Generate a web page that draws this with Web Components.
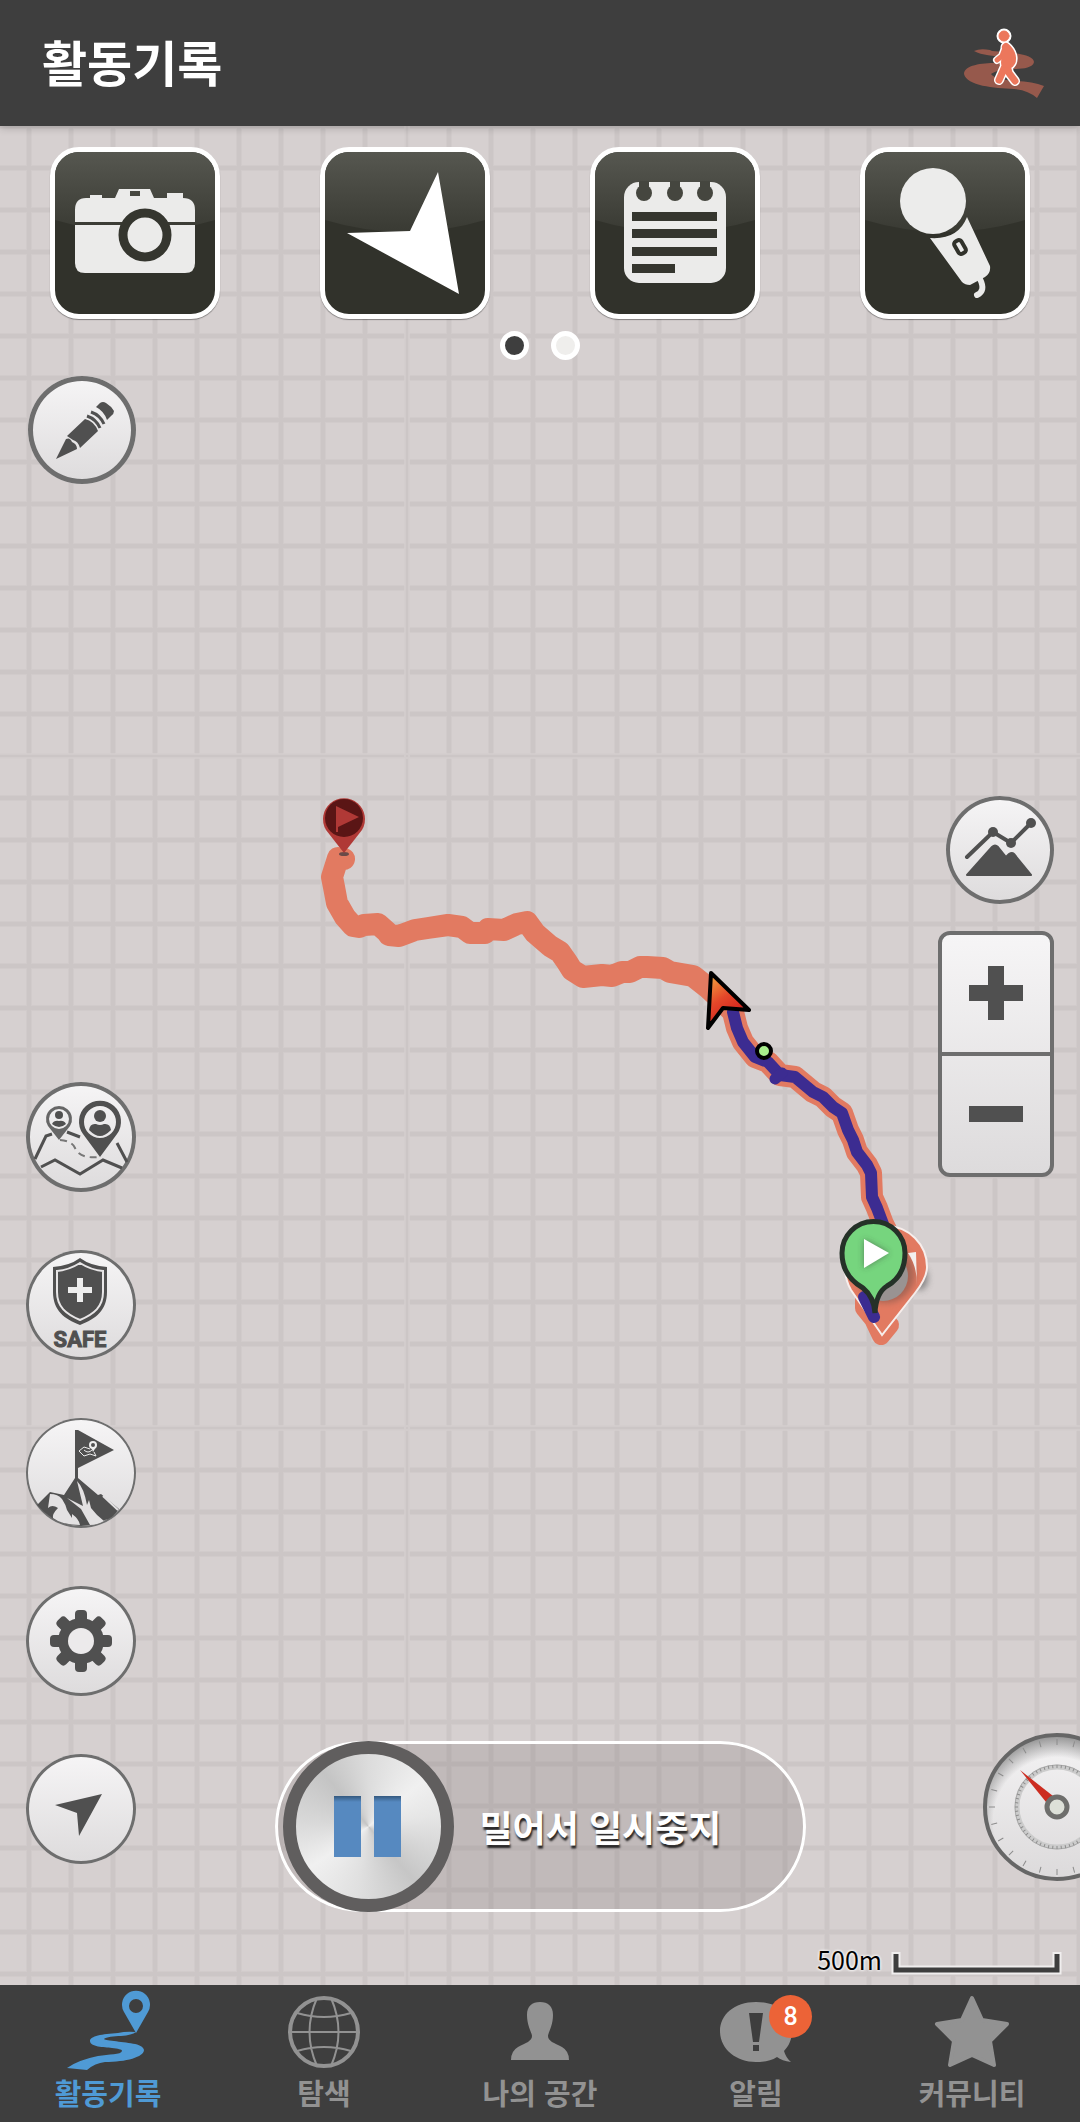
<!DOCTYPE html>
<html lang="ko">
<head>
<meta charset="utf-8">
<meta name="viewport" content="width=device-width, initial-scale=1">
<title>활동기록</title>
<style>
  body {
    margin: 0;
    font-family: "Noto Sans CJK KR", "Noto Sans", sans-serif;
    background: #d6d0d0;
  }
</style>
</head>
<body>
<app-screen>
  <app-header slot="header" heading="활동기록">
    <svg width="82" height="70" viewBox="0 0 82 70">
      <path fill="#96594c" d="M10 23Q16 20 26 22L28 23C46 24 70 26 70 34C69 40 58 41 50 41C40 41 31 43 27 46C30 50 40 52 50 53Q68 53 80 58Q77 63 73 70Q64 62 50 61C30 60 3 58 0 46C0 37 18 35 32 35C42 34 48 32 40 30C30 27 18 28 10 23Z"/>
      <g stroke-linecap="round" stroke-linejoin="round" fill="none">
        <g stroke="#fff">
          <circle cx="40" cy="8" r="6" fill="#fff" stroke-width="3"/>
          <path stroke-width="11" d="M42 19C48 24 50 32 46 36"/>
          <path stroke-width="8" d="M41 20L38 28L33 32"/>
          <path stroke-width="10" d="M42 36L35 52M43 37L45 45L51 53"/>
          <path stroke-width="13" d="M43 23L42 35"/>
        </g>
        <g stroke="#ec775c">
          <circle cx="40" cy="8" r="5" fill="#ec775c" stroke-width="1"/>
          <path stroke-width="8" d="M42 19C48 24 50 32 46 36"/>
          <path stroke-width="5" d="M41 20L38 28L33 32"/>
          <path stroke-width="7" d="M42 36L35 52M43 37L45 45L51 53"/>
          <path stroke-width="10" d="M43 23L42 35"/>
        </g>
      </g>
    </svg>
  </app-header>

  <route-map slot="map"></route-map>

  <tool-tile slot="tools" name="사진">
    <svg viewBox="5 5 160 162">
      <path fill="#ebebea" fill-rule="evenodd" d="M36 51H40V48H52V51H65L69 42H100L104 51H117V46H133V51Q145 51 145 63V75H25V63Q25 51 36 51ZM80 44V49H90V44Z"/>
      <path fill="#ebebea" d="M25 78H145V116Q145 126 135 126H35Q25 126 25 116Z"/>
      <circle cx="95" cy="88" r="22" fill="#ebebea" stroke="#35362f" stroke-width="9"/>
    </svg>
  </tool-tile>
  <tool-tile slot="tools" name="방향">
    <svg viewBox="5 5 160 162"><path fill="#fff" d="M118 25L139 147L27 86L90 84Z"/></svg>
  </tool-tile>
  <tool-tile slot="tools" name="메모">
    <svg viewBox="5 5 160 162">
      <rect x="34" y="35" width="102" height="101" rx="15" fill="#ebebea"/>
      <g fill="#45463f">
        <circle cx="54" cy="46" r="8"/><circle cx="85" cy="46" r="8"/><circle cx="115" cy="46" r="8"/>
        <path d="M49 34h10v8h-10zM80 34h10v8h-10zM110 34h10v8h-10z"/>
      </g>
      <path fill="#35362f" d="M42 65h85v9h-85zM42 82h85v9h-85zM42 100h85v9h-85zM42 117h43v9h-43z"/>
    </svg>
  </tool-tile>
  <tool-tile slot="tools" name="음성">
    <svg viewBox="5 5 160 162">
      <circle cx="73" cy="54" r="33" fill="#ececeb"/>
      <path fill="#ebebea" d="M70 91Q98 93 107 70L130 119Q131 126 125 130L110 138Q105 138 102 135Z"/>
      <rect x="-4" y="-7" width="8" height="14" rx="3" transform="translate(100 100) rotate(-30)" fill="#ebebea" stroke="#31322b" stroke-width="4"/>
      <path d="M120 132Q126 144 117 148" fill="none" stroke="#ebebea" stroke-width="6" stroke-linecap="round"/>
    </svg>
  </tool-tile>

  <page-dots slot="dots" count="2" current="0"></page-dots>

  <round-button slot="left-top" name="편집" style="--size: 108px; --ring: 5px">
    <svg viewBox="0 0 108 108">
      <g fill="#505050">
        <path d="M28 83L38 63Q42 61 44 66Q49 68 49 73Z"/>
        <path d="M39 60L57 43Q66 45 70 55L52 72Q50 65 45 64Z"/>
        <path d="M68 31L72 27Q75 25 78 27Q83 30 86 35Q86 38 83 40L79 44Q76 35 68 31Z"/>
      </g>
      <path fill="none" stroke="#505050" stroke-width="3" d="M59 40Q68 43 72 52M63 36Q72 39 76 48"/>
    </svg>
  </round-button>

  <round-button slot="left" name="친구 위치" style="--ring: 4px">
    <svg viewBox="0 0 110 110" fill="none" stroke="#505050">
      <path stroke-width="3" d="M9 77L20 54L26 52M41 50L54 55M91 61L101 80M15 85L29 78L54 92L77 78L96 86"/>
      <path stroke-width="2" stroke-dasharray="7 5" stroke="#777" d="M34 58Q46 59 49 66Q54 77 73 75"/>
      <path fill="#505050" stroke="none" fill-rule="evenodd" d="M74 75L57 52A21 21 0 1 1 91 52ZM74 24a16 16 0 1 0 0 32a16 16 0 1 0 0-32Z"/>
      <path fill="#666" stroke="none" fill-rule="evenodd" d="M33 58L22 44A13 13 0 1 1 44 44ZM33 27a10 10 0 1 0 0 20a10 10 0 1 0 0-20Z"/>
      <g fill="#505050" stroke="none">
        <circle cx="74" cy="34" r="6"/><path d="M63 48Q64 41 70 42Q74 44 78 42Q84 41 85 48Q79 54 74 54Q69 54 63 48Z"/>
        <circle cx="33" cy="33" r="4"/><path d="M26 42Q28 38 33 39Q38 38 40 42Q33 48 26 42Z"/>
      </g>
    </svg>
  </round-button>
  <round-button slot="left" name="안전" style="--ring: 3px">
    <svg viewBox="0 0 110 110">
      <path fill="#505050" d="M54 8Q65 16 81 17V42C81 60 70 69 54 75C38 69 27 60 27 42V17Q43 16 54 8Z"/>
      <path fill="none" stroke="#e8e6e7" stroke-width="2" d="M54 13Q65 20 77 21V42C77 57 68 64 54 70C40 64 31 57 31 42V21Q43 20 54 13Z"/>
      <path fill="#eee" d="M51 28h6v9h9v6h-9v9h-6v-9h-9v-6h9z"/>
      <text x="54" y="97" text-anchor="middle" fill="#505050" stroke="#505050" stroke-width="1" font-family="Roboto, 'Liberation Sans', sans-serif" font-weight="700" font-size="22">SAFE</text>
    </svg>
  </round-button>
  <round-button slot="left" name="정상 인증" style="--ring: 2px">
    <svg viewBox="0 0 110 110">
      <path fill="#505050" d="M49 12H52L88 32L52 50V60H49Z"/>
      <path fill="none" stroke="#eee" stroke-width="1" d="M53 33L58 29L64 31M53 33L58 38L64 36L70 38L68 34M58 32Q62 36 66 32"/>
      <circle cx="67" cy="27" r="3" fill="none" stroke="#eee" stroke-width="2"/><path d="M65 29L67 34L70 29Z" fill="#eee"/>
      <path fill="#505050" d="M11 87L24 74L38 77L49 60H52L72 77L75 76L93 91Q86 101 79 102Q72 107 55 108Q36 107 26 100Q17 94 11 87Z"/>
      <path fill="#e3e1e2" d="M22 90L24 76Q32 76 36 81Q40 87 41 92L46 100L46 96Q53 101 54 107Q36 107 27 100Q26 96 32 90Q26 86 22 90Z"/>
      <path fill="#e3e1e2" d="M51 63Q58 70 61 87L63 82L65 90Q71 98 78 103Q71 107 64 107L55 91L41 80L57 88Z"/>
      <path stroke="#e3e1e2" stroke-width="2" d="M77 78L92 92"/>
    </svg>
  </round-button>
  <round-button slot="left" name="설정" style="--ring: 3px">
    <svg viewBox="0 0 110 110">
      <g fill="#505050">
        <rect x="49" y="24" width="12" height="62" rx="4"/>
        <rect x="49" y="24" width="12" height="62" rx="4" transform="rotate(45 55 55)"/>
        <rect x="49" y="24" width="12" height="62" rx="4" transform="rotate(90 55 55)"/>
        <rect x="49" y="24" width="12" height="62" rx="4" transform="rotate(135 55 55)"/>
        <circle cx="55" cy="55" r="23"/>
      </g>
      <circle cx="55" cy="55" r="13" fill="#eceaeb"/>
    </svg>
  </round-button>
  <round-button slot="left" name="현재 위치" style="--ring: 3px">
    <svg viewBox="0 0 110 110"><path fill="#505050" d="M76 40L53 82L51 59L29 51Z"/></svg>
  </round-button>

  <round-button slot="right" name="고도" style="--size: 108px; --ring: 4px">
    <svg viewBox="0 0 108 108">
      <path fill="none" stroke="#505050" stroke-width="4" stroke-linecap="round" d="M21 61L47 36L65 47L85 27"/>
      <g fill="#505050"><circle cx="47" cy="36" r="5"/><circle cx="65" cy="47" r="5"/><circle cx="85" cy="27" r="5"/></g>
      <path fill="#505050" stroke="#505050" stroke-width="2" stroke-linejoin="round" d="M21 79L46 51Q49 48 52 51L60 61L63 58Q66 56 68 58L85 79Z"/>
    </svg>
  </round-button>
  <zoom-control slot="right"></zoom-control>
  <compass-gauge slot="gauge"></compass-gauge>
  <map-scale slot="scale">500m</map-scale>

  <slide-switch slot="slider">밀어서 일시중지</slide-switch>

  <tab-bar slot="tabs">
    <tab-item active>
      <svg slot="icon" viewBox="0 -3 88 80" fill="currentColor">
        <path fill-rule="evenodd" d="M72 40L60 19A14 14 0 1 1 84 19ZM72 6a7 7 0 1 0 0 14a7 7 0 1 0 0-14Z"/>
        <path d="M72 39Q62 38 54 40C38 41 26 43 26 48C26 54 40 54 48 55C54 56 58 56 58 58C57 62 45 61 34 63Q14 67 3 75L23 77Q31 70 41 69C62 69 80 64 80 57C79 50 62 50 50 48Q40 47 40 46C42 44 50 43 57 43Q68 42 72 39Z"/>
      </svg>활동기록
    </tab-item>
    <tab-item>
      <svg slot="icon" viewBox="0 0 88 80" fill="none" stroke="currentColor" stroke-width="2">
        <circle cx="44" cy="42" r="34" stroke-width="4"/>
        <path d="M10 42H78M17 23Q44 31 71 23M17 61Q44 53 71 61M37 8Q22 42 37 76M51 8Q66 42 51 76"/>
      </svg>탐색
    </tab-item>
    <tab-item>
      <svg slot="icon" viewBox="0 0 88 80" fill="currentColor">
        <path d="M15 70Q15 61 22 57C30 53 36 51 36 46C36 43 31 36 31 25C31 16 36 12 44 12C52 12 57 16 57 25C57 36 52 43 52 46C52 51 58 53 66 57Q73 61 73 70Z"/>
      </svg>나의 공간
    </tab-item>
    <tab-item badge="8">
      <svg slot="icon" viewBox="0 0 88 80" fill="currentColor">
        <path fill-rule="evenodd" d="M44 12C66 12 80 24 80 41C80 49 77 56 72 61Q74 68 79 72Q70 71 65 67C59 71 51 72 44 72C24 72 8 59 8 41C8 25 22 12 44 12ZM37 23L41 52H47L51 23ZM41 55V61H47V55Z"/>
      </svg>알림
    </tab-item>
    <tab-item>
      <svg slot="icon" viewBox="0 0 88 80" fill="currentColor" stroke="currentColor" stroke-width="4" stroke-linejoin="round">
        <path d="M44 8L54 30L79 34L62 51L66 75L44 65L22 75L26 51L9 34L34 30Z"/>
      </svg>커뮤니티
    </tab-item>
  </tab-bar>
</app-screen>

<script>
class AppScreen extends HTMLElement {
  connectedCallback() {
    const root = this.attachShadow({ mode: 'open' });
    root.innerHTML = `
    <style>
      :host { display: flex; flex-direction: column; min-height: 100vh; }
      main {
        position: relative;
        flex: 1;
        display: flex;
        flex-direction: column;
        overflow: hidden;
        padding-top: 21px;
        box-sizing: border-box;
      }
      /* the map lies under every control */
      .map { position: absolute; inset: 0; }
      .tools, .dots, .body { position: relative; }
      .tools { display: grid; grid-template-columns: repeat(4, 1fr); justify-items: center; }
      .dots { display: flex; justify-content: center; padding: 12px 0 16px; }
      .body { flex: 1; display: grid; grid-template-columns: 1fr auto 1fr; }
      .left, .right { display: flex; flex-direction: column; }
      .left { justify-content: space-between; align-items: flex-start; padding: 0 0 121px 26px; }
      .top { padding-left: 2px; }
      .stack { display: flex; flex-direction: column; gap: 58px; }
      .center { display: flex; align-items: flex-end; padding-bottom: 73px; }
      .right { align-items: flex-end; }
      .before { flex: 43; }
      .after { flex: 57; }
      .view { display: flex; flex-direction: column; align-items: flex-end; gap: 27px; padding-right: 26px; }
      .gauge { margin-right: -51px; }
      .scale { padding: 59px 18px 7px 0; }
    </style>
    <slot name="header"></slot>
    <main>
      <div class="map"><slot name="map"></slot></div>
      <div class="tools"><slot name="tools"></slot></div>
      <div class="dots"><slot name="dots"></slot></div>
      <div class="body">
        <div class="left">
          <div class="top"><slot name="left-top"></slot></div>
          <div class="stack"><slot name="left"></slot></div>
        </div>
        <div class="center"><slot name="slider"></slot></div>
        <div class="right">
          <div class="before"></div>
          <div class="view"><slot name="right"></slot></div>
          <div class="after"></div>
          <div class="gauge"><slot name="gauge"></slot></div>
          <div class="scale"><slot name="scale"></slot></div>
        </div>
      </div>
    </main>
    <slot name="tabs"></slot>`;
  }
}

class AppHeader extends HTMLElement {
  connectedCallback() {
    const root = this.attachShadow({ mode: 'open' });
    root.innerHTML = `
    <style>
      :host {
        display: block;
        position: relative;
        z-index: 1;
        background: #3e3e3e;
        box-shadow: 0 2px 8px rgba(0, 0, 0, 0.2);
      }
      header {
        display: flex;
        align-items: center;
        justify-content: space-between;
        height: 126px;
        padding: 0 34px 0 42px;
      }
      h1 { margin: 0; padding-bottom: 4px; color: #fff; font-size: 49px; line-height: 72px; font-weight: 700; }
      ::slotted(svg) { display: block; }
    </style>
    <header>
      <h1>${this.getAttribute('heading')}</h1>
      <slot></slot>
    </header>`;
  }
}

class RouteMap extends HTMLElement {
  connectedCallback() {
    const root = this.attachShadow({ mode: 'open' });
    const upper = '344,859 338,858 332,877 334,887 337,903 345,917 353,926 359,927 364,925 378,924 387,932 389,935 399,936 415,930 428,928 448,925 462,927 470,933 485,933 488,929 504,930 517,924 527,922 535,933 550,946 560,952 567,962 572,970 583,977 602,975 612,976 622,972 630,972 640,967 647,967 663,968 670,972 693,976 707,987 721,1000';
    const lower = '733,1012 737,1028 743,1042 755,1057 768,1062 780,1075 795,1077 807,1087 813,1092 823,1097 833,1107 842,1113 848,1130 853,1140 857,1152 867,1165 871,1173 872,1197 877,1208 883,1224';
    root.innerHTML = `
    <style>
      :host, svg { display: block; width: 100%; height: 100%; }
    </style>
    <svg viewBox="0 126 1080 1859" preserveAspectRatio="xMidYMid slice">
      <defs>
        <pattern id="grid" width="42" height="42" patternUnits="userSpaceOnUse">
          <path d="M29 0V42M0 0H42M0 42H42" stroke="#c8c2c2" stroke-opacity="0.35" stroke-width="6"/>
          <path d="M29 0V42M0 0H42M0 42H42" stroke="#c8c2c2" stroke-opacity="0.45" stroke-width="4"/>
        </pattern>
        <linearGradient id="cursor" x1="0" y1="0" x2="0.5" y2="1">
          <stop offset="0" stop-color="#f2b243"/><stop offset="0.5" stop-color="#e5482a"/><stop offset="0.8" stop-color="#d62a20"/><stop offset="1" stop-color="#8c1c50"/>
        </linearGradient>
        <filter id="soft" x="-50%" y="-50%" width="200%" height="200%"><feGaussianBlur stdDeviation="3"/></filter>
      </defs>
      <rect y="126" width="1080" height="1859" fill="#d6d0d0"/>
      <rect y="126" width="1080" height="1859" fill="url(#grid)"/>
      <!-- tile joints: the grid line is thinner there -->
      <path d="M405 126V1985M409 126V1985M0 754H1080M0 758H1080M0 1426H1080M0 1430H1080" stroke="#d6d0d0" stroke-width="2" stroke-opacity="0.6"/>

      <g fill="none" stroke-linejoin="round" stroke-linecap="round">
        <polyline points="${upper} ${lower} 886,1230" stroke="#e27a61" stroke-width="22"/>
        <polyline points="864,1300 864,1308 873,1319 881,1336 890,1325" stroke="#e27a61" stroke-width="18"/>
        <polyline points="${lower}" stroke="#3c2c91" stroke-width="12"/>
        <path d="M782 1073L775 1079" stroke="#3c2c91" stroke-width="11"/>
      </g>

      <ellipse cx="920" cy="1278" rx="8" ry="12" fill="#555" opacity="0.6" filter="url(#soft)"/>
      <path d="M882 1335L851 1290Q845 1280 845 1267A41 41 0 0 1 927 1267Q927 1278 915 1293Z" fill="#e27a61" stroke="#f7eeec" stroke-width="2"/>
      <circle cx="886" cy="1274" r="29" fill="#82564b" opacity="0.6" filter="url(#soft)"/>
      <circle cx="883" cy="1276" r="25" fill="#999392"/>
      <path d="M908 1253L916 1252L917 1285Q917 1266 908 1253Z" fill="#f3efee"/>
      <path d="M864 1297L874 1317" stroke="#3c2c91" stroke-width="12" stroke-linecap="round"/>
      <path d="M875 1313Q874 1297 863 1288Q842 1276 842 1253A31 31 0 0 1 905 1253Q905 1276 887 1286Q876 1293 875 1313Z" fill="#76d57e" stroke="#253128" stroke-width="5"/>
      <path d="M864 1239V1268L889 1253Z" fill="#333" opacity="0.5" filter="url(#soft)"/>
      <path d="M864 1239V1268L889 1253Z" fill="#fff"/>

      <circle cx="764" cy="1051" r="7" fill="#a8ee8c" stroke="#000" stroke-width="4"/>
      <path d="M711 973L749 1010L723 1008L708 1028Z" fill="url(#cursor)" stroke="#000" stroke-width="4" stroke-linejoin="round"/>

      <ellipse cx="344" cy="854" rx="5" ry="2" fill="#6a4a48"/>
      <path d="M344 853L326 830A21 21 0 1 1 362 830Z" fill="#b03936"/>
      <circle cx="344" cy="818" r="19" fill="#5a1515"/>
      <path d="M336 806L359 817L338 827V832H336Z" fill="#b03936"/>
    </svg>`;
  }
}

class ToolTile extends HTMLElement {
  connectedCallback() {
    const root = this.attachShadow({ mode: 'open' });
    root.innerHTML = `
    <style>
      :host { display: block; }
      button {
        display: grid;
        width: 170px;
        height: 172px;
        padding: 0;
        border: 5px solid #fff;
        border-radius: 29px;
        background: #31322b;
        overflow: hidden;
        box-shadow: 0 1px 1px rgba(0, 0, 0, 0.4);
      }
      .gloss, ::slotted(svg) { grid-area: 1 / 1; width: 160px; height: 162px; }
    </style>
    <button type="button" aria-label="${this.getAttribute('name')}">
      <svg class="gloss" viewBox="5 5 160 162">
        <linearGradient id="g" x1="0" y1="0" x2="0" y2="1">
          <stop offset="0" stop-color="#565750"/><stop offset="1" stop-color="#393a33"/>
        </linearGradient>
        <path d="M5 5H165V73Q85 97 5 73Z" fill="url(#g)"/>
      </svg>
      <slot></slot>
    </button>`;
  }
}

class PageDots extends HTMLElement {
  connectedCallback() {
    const root = this.attachShadow({ mode: 'open' });
    const current = Number(this.getAttribute('current'));
    let dots = '';
    for (let i = 0; i < Number(this.getAttribute('count')); i++) {
      dots += `<i class="${i === current ? 'on' : ''}"></i>`;
    }
    root.innerHTML = `
    <style>
      :host { display: flex; gap: 22px; }
      i {
        width: 29px;
        height: 29px;
        box-sizing: border-box;
        border: 5px solid #fff;
        border-radius: 50%;
        background: #efeeec;
      }
      .on { background: #3e3e3e; }
    </style>${dots}`;
  }
}

class RoundButton extends HTMLElement {
  connectedCallback() {
    const root = this.attachShadow({ mode: 'open' });
    root.innerHTML = `
    <style>
      :host { display: block; }
      button {
        display: grid;
        width: var(--size, 110px);
        height: var(--size, 110px);
        padding: 0;
        border: 0;
        border-radius: 50%;
        background: linear-gradient(#f6f5f6, #dddbdc);
        box-shadow: inset 0 0 0 var(--ring, 3px) #6e6e6e;
      }
      ::slotted(svg) { width: 100%; height: 100%; }
    </style>
    <button type="button" aria-label="${this.getAttribute('name')}"><slot></slot></button>`;
  }
}

class ZoomControl extends HTMLElement {
  connectedCallback() {
    const root = this.attachShadow({ mode: 'open' });
    root.innerHTML = `
    <style>
      :host {
        display: flex;
        flex-direction: column;
        width: 116px;
        height: 246px;
        box-sizing: border-box;
        border: 4px solid #6e6e6e;
        border-radius: 12px;
        background: linear-gradient(#f6f5f6, #dddbdc);
      }
      button {
        flex: 1;
        display: grid;
        place-items: center;
        padding: 0;
        border: 0;
        background: none;
      }
      button + button { border-top: 4px solid #6e6e6e; }
    </style>
    <button type="button" aria-label="확대"><svg width="54" height="54"><path d="M19 0h16v19h19v16h-19v19h-16v-19h-19v-16h19z" fill="#505050"/></svg></button>
    <button type="button" aria-label="축소"><svg width="54" height="16"><path d="M0 0h54v16h-54z" fill="#505050"/></svg></button>`;
  }
}

class CompassGauge extends HTMLElement {
  connectedCallback() {
    const root = this.attachShadow({ mode: 'open' });
    root.innerHTML = `
    <style>
      :host, svg { display: block; }
    </style>
    <svg width="148" height="148" viewBox="-74 -74 148 148">
      <defs>
        <linearGradient id="face" x1="0" y1="0" x2="0" y2="1">
          <stop offset="0" stop-color="#f4f3f4"/><stop offset="1" stop-color="#dcdadb"/>
        </linearGradient>
        <radialGradient id="shade" gradientUnits="userSpaceOnUse" cx="0" cy="14" r="86">
          <stop offset="0.74" stop-color="#777" stop-opacity="0"/><stop offset="1" stop-color="#777" stop-opacity="0.8"/>
        </radialGradient>
      </defs>
      <circle r="72" fill="url(#face)"/>
      <circle r="72" fill="url(#shade)" stroke="#666" stroke-width="4"/>
      ${this.ticks(24, 62, 68, 1)}
      <circle r="40" fill="none" stroke="#ccc" stroke-width="5"/>
      <circle r="42" fill="none" stroke="#aaa" stroke-width="1"/>
      ${this.ticks(60, 39, 42, 1)}
      <path d="M-37 -37L-4 -11L-11 -5Z" fill="#cc2c20"/>
      <circle r="10" fill="#dde0d8" stroke="#6e6e6c" stroke-width="5"/>
    </svg>`;
  }

  ticks(count, from, to, width) {
    let out = '';
    for (let i = 0; i < count; i++) {
      out += `<path d="M0 ${-from}V${-to}" stroke="#8c8c8c" stroke-width="${width}" transform="rotate(${i * 360 / count})"/>`;
    }
    return out;
  }
}

class MapScale extends HTMLElement {
  connectedCallback() {
    const root = this.attachShadow({ mode: 'open' });
    root.innerHTML = `
    <style>
      :host {
        display: flex;
        align-items: flex-end;
        gap: 9px;
        color: #000;
        font-size: 25px;
        line-height: 38px;
        text-shadow: 0 0 3px #fff, 0 0 3px #fff;
      }
      svg { display: block; }
    </style>
    <span><slot></slot></span>
    <svg width="171" height="26" fill="none">
      <path d="M5 3V18H166V3" stroke="#f0eeee" stroke-width="9" stroke-linecap="square"/>
      <path d="M5 2V18H166V2" stroke="#3e3e3e" stroke-width="5"/>
    </svg>`;
  }
}

class SlideSwitch extends HTMLElement {
  connectedCallback() {
    const root = this.attachShadow({ mode: 'open' });
    root.innerHTML = `
    <style>
      :host {
        display: grid;
        align-items: center;
        width: 531px;
        height: 171px;
        border-radius: 86px;
        background: rgba(120, 110, 110, 0.22);
        box-shadow: inset 0 0 0 3px #fff;
      }
      input, label { grid-area: 1 / 1; }
      input {
        appearance: none;
        -webkit-appearance: none;
        height: 171px;
        margin: 0 8px;
        background: none;
      }
      input::-webkit-slider-thumb {
        -webkit-appearance: none;
        width: 171px;
        height: 171px;
        box-sizing: border-box;
        border: 13px solid #605e5e;
        border-radius: 50%;
        background:
          linear-gradient(#34597f, #5689c0 6px) 38px 42px / 27px 61px no-repeat,
          linear-gradient(#34597f, #5689c0 6px) 78px 42px / 27px 61px no-repeat,
          conic-gradient(#dcdcdc, #f0f0f0 50deg, #e6e6e6 80deg, #c6c6c6 140deg, #e0e0e0 190deg, #f0f0f0 235deg, #d8d8d8 275deg, #c4c4c4 320deg, #dcdcdc);
        background-origin: padding-box;
      }
      label {
        padding: 0 0 2px 205px;
        pointer-events: none;
        color: #fff;
        font-size: 36px;
        line-height: 54px;
        font-weight: 700;
        white-space: nowrap;
        text-shadow: 1px 3px 2px rgba(0, 0, 0, 0.8);
      }
    </style>
    <input id="slide" type="range" min="0" max="100" value="0">
    <label for="slide"><slot></slot></label>`;
  }
}

class TabBar extends HTMLElement {
  connectedCallback() {
    const root = this.attachShadow({ mode: 'open' });
    root.innerHTML = `
    <style>
      :host { display: block; background: #3e3e3e; }
      nav { display: grid; grid-template-columns: repeat(5, 1fr); height: 137px; }
    </style>
    <nav><slot></slot></nav>`;
  }
}

class TabItem extends HTMLElement {
  connectedCallback() {
    const root = this.attachShadow({ mode: 'open' });
    const badge = this.getAttribute('badge');
    root.innerHTML = `
    <style>
      :host { display: block; color: #929292; }
      :host([active]) { color: #4f9ad5; }
      a {
        display: flex;
        flex-direction: column;
        align-items: center;
        padding-top: 5px;
        color: inherit;
        text-decoration: none;
        font-size: 29px;
        line-height: 44px;
        font-weight: 700;
      }
      .icon { position: relative; }
      ::slotted(svg) { display: block; width: 88px; height: 80px; }
      /* count sits over the icon's corner */
      b {
        position: absolute;
        top: 5px;
        left: 57px;
        width: 43px;
        height: 43px;
        border-radius: 50%;
        background: #ec6337;
        color: #fff;
        font-family: Roboto, "Noto Sans", sans-serif;
        font-size: 25px;
        line-height: 43px;
        font-weight: 500;
        text-align: center;
      }
    </style>
    <a href="#">
      <span class="icon"><slot name="icon"></slot>${badge ? `<b>${badge}</b>` : ''}</span>
      <span><slot></slot></span>
    </a>`;
  }
}

customElements.define('app-screen', AppScreen);
customElements.define('app-header', AppHeader);
customElements.define('route-map', RouteMap);
customElements.define('tool-tile', ToolTile);
customElements.define('page-dots', PageDots);
customElements.define('round-button', RoundButton);
customElements.define('zoom-control', ZoomControl);
customElements.define('compass-gauge', CompassGauge);
customElements.define('map-scale', MapScale);
customElements.define('slide-switch', SlideSwitch);
customElements.define('tab-bar', TabBar);
customElements.define('tab-item', TabItem);
</script>
</body>
</html>
